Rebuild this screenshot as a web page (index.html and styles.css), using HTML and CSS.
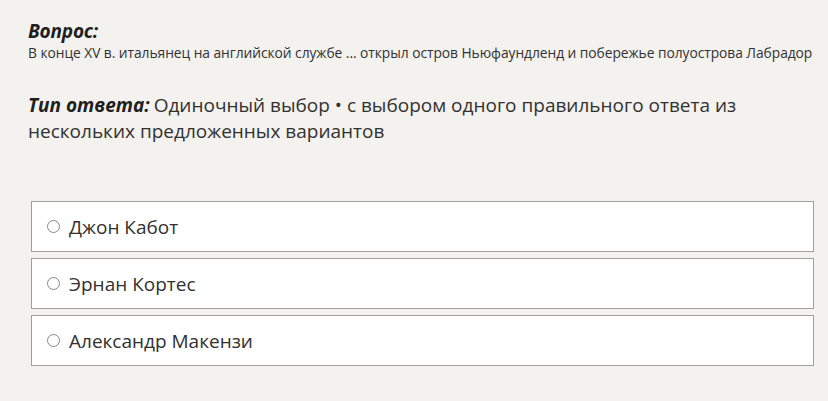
FILE: index.html
```html
<!DOCTYPE html>
<html lang="ru">
<head>
<meta charset="utf-8">
<link rel="stylesheet" href="styles.css">
</head>
<body>
<div class="page">
  <div class="question">
    <div class="q-label">Вопрос:</div>
    <div class="q-text">В конце XV в. итальянец на английской службе ... открыл остров Ньюфаундленд и побережье полуострова Лабрадор</div>
  </div>
  <p class="type"><span class="type-label">Тип ответа:</span><span class="type-text">Одиночный выбор • с выбором одного правильного ответа из нескольких предложенных вариантов</span></p>
  <div class="options">
    <div class="option"><span class="radio"></span><span class="opt-text">Джон Кабот</span></div>
    <div class="option"><span class="radio"></span><span class="opt-text">Эрнан Кортес</span></div>
    <div class="option"><span class="radio"></span><span class="opt-text">Александр Макензи</span></div>
  </div>
</div>
</body>
</html>
```

FILE: styles.css
```css
html, body {
  margin: 0;
  padding: 0;
  background: #f3f2ef;
}
body {
  font-family: "Open Sans", "Noto Sans", sans-serif;
  color: #323130;
}
.page {
  padding: 19px 14px 0 28px;
}
.q-label {
  font-size: 19px;
  font-weight: 700;
  font-style: italic;
  line-height: 24px;
  color: #201f1e;
  letter-spacing: -0.2px;
}
.q-text {
  font-size: 13.8px;
  line-height: 19px;
  white-space: nowrap;
  letter-spacing: -0.05px;
}
.type {
  margin: 30px 0 0 0;
  font-size: 19px;
  line-height: 26px;
  max-width: 760px;
}
.type-label {
  font-weight: 700;
  font-style: italic;
  color: #201f1e;
  margin-right: 4px;
}
.options {
  margin-top: 57px;
  margin-left: 3px;
  display: flex;
  flex-direction: column;
  gap: 6px;
}
.option {
  height: 49px;
  background: #ffffff;
  border: 1px solid #a19f9d;
  display: flex;
  align-items: center;
  padding-left: 15px;
}
.radio {
  width: 11px;
  height: 11px;
  border: 1px solid #8a8886;
  border-radius: 50%;
  margin-right: 9px;
  flex: none;
}
.opt-text {
  font-size: 19px;
  color: #323130;
}
```
